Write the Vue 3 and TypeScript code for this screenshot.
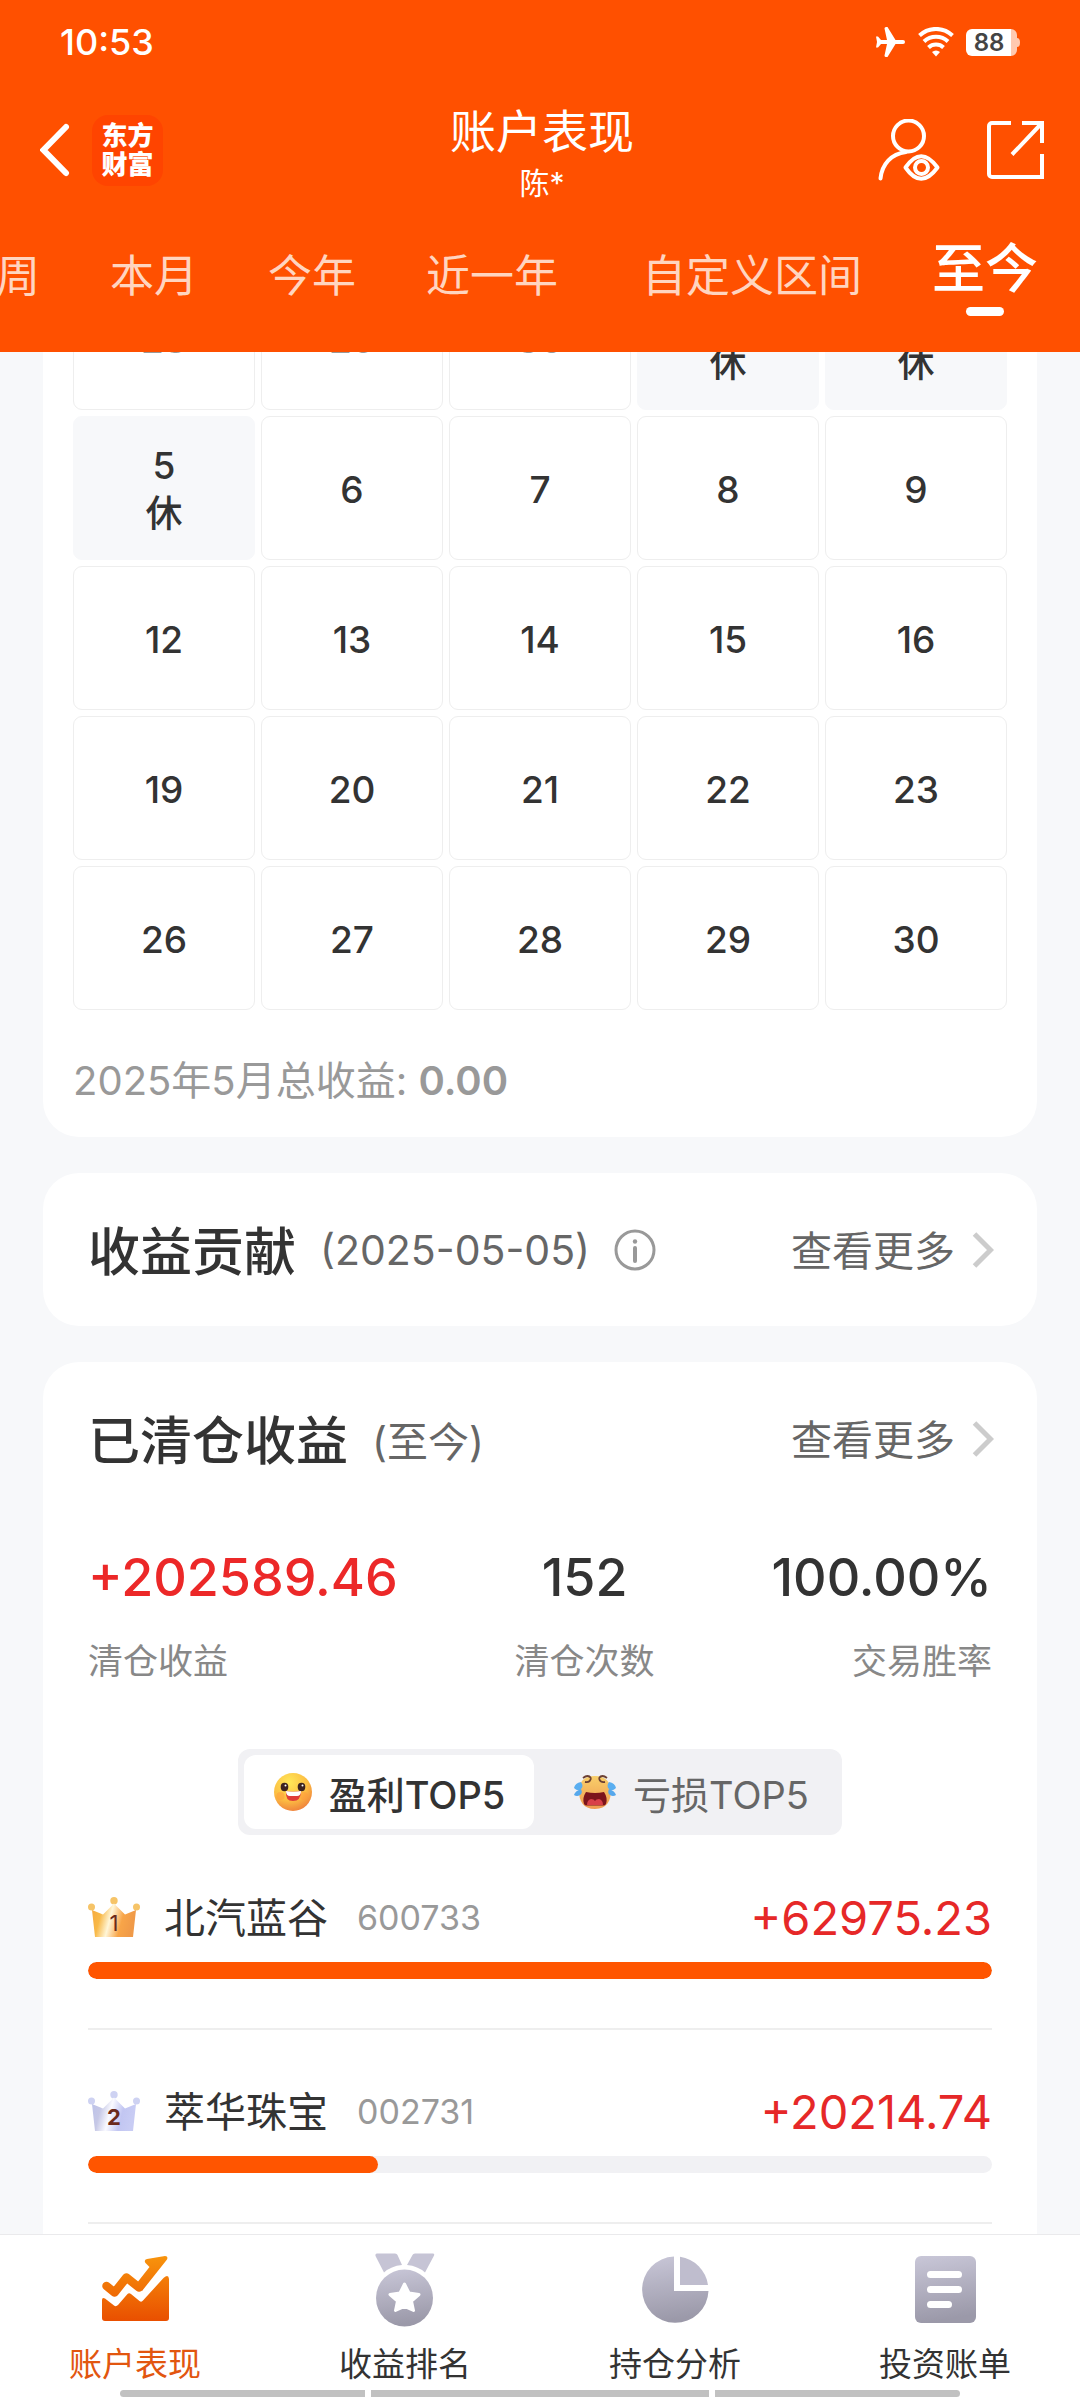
<script setup lang="ts">
import { ref } from 'vue'

interface Day {
  label: string
  rest?: boolean
  outside?: boolean
}

interface Holding {
  rank: number
  name: string
  code: string
  amount: string
  share: number
}

const ranges: string[] = ['本周', '本月', '今年', '近一年', '自定义区间', '至今']
const activeRange = ref<string>('至今')

const days: Day[] = [
  { label: '28', outside: true },
  { label: '29', outside: true },
  { label: '30', outside: true },
  { label: '1', rest: true },
  { label: '2', rest: true },
  { label: '5', rest: true },
  ...[6, 7, 8, 9, 12, 13, 14, 15, 16, 19, 20, 21, 22, 23, 26, 27, 28, 29, 30].map((n) => ({
    label: String(n),
  })),
]

const stats = [
  { value: '+202589.46', label: '清仓收益', gain: true },
  { value: '152', label: '清仓次数', gain: false },
  { value: '100.00%', label: '交易胜率', gain: false },
]

const board = ref<'profit' | 'loss'>('profit')

const holdings: Holding[] = [
  { rank: 1, name: '北汽蓝谷', code: '600733', amount: '+62975.23', share: 100 },
  { rank: 2, name: '萃华珠宝', code: '002731', amount: '+20214.74', share: 32.1 },
]
</script>

<template>
  <div class="app">
    <header class="header">
      <div class="status">
        <time class="clock">10:53</time>
        <div class="signals">
          <svg width="30" height="30" viewBox="0 0 30 30" fill="#fff" aria-hidden="true">
            <path d="M0 9.500h2l3 3.500h6L8.500 1.500Q8.500 0 10 0h1.500L19.500 13H27a2 2 0 0 1 0 4h-7.500L11.500 30H10q-1.500 0-1.500-1.500L11 17H5l-3 3.500H0L1 15z" />
          </svg>
          <svg width="36" height="30" viewBox="0 0 36 30" fill="none" stroke="#fff" stroke-width="4" aria-hidden="true">
            <path d="M1.500 8.500a24 24 0 0 1 33 0" />
            <path d="M6 14.500a17.500 17.500 0 0 1 24 0" />
            <path d="M10.500 20.500a11 11 0 0 1 15 0" />
            <path d="M18 29.500l-4-4.500a6 6 0 0 1 8 0z" fill="#fff" stroke="none" />
          </svg>
          <span class="battery">
            <svg width="54" height="27" viewBox="0 0 54 27" aria-hidden="true">
              <path d="M45 0a6 6 0 0 1 6 6v3q3 0 3 4.500T51 18v3a6 6 0 0 1-6 6z" fill="#ffc9b0" />
              <path d="M6 0h39v27H6a6 6 0 0 1-6-6V6a6 6 0 0 1 6-6z" fill="#fff" />
            </svg>
            <span class="battery-level">88</span>
          </span>
        </div>
      </div>

      <div class="titlebar">
        <div class="side">
          <button class="icon-button" aria-label="返回">
            <svg width="30" height="54" viewBox="0 0 30 54" fill="none" stroke="#fff" stroke-width="6" stroke-linecap="round">
              <path d="M26 4L3.500 27L26 50" />
            </svg>
          </button>
          <a class="logo" href="#"><span>东方</span><span>财富</span></a>
        </div>
        <div class="heading">
          <h1>账户表现</h1>
          <p>陈*</p>
        </div>
        <div class="side side-end">
          <button class="icon-button" aria-label="账户可见性">
            <svg width="62" height="62" viewBox="0 0 62 62" fill="none" stroke="#fff" stroke-width="4" stroke-linecap="round">
              <circle cx="30.500" cy="17" r="15.500" />
              <path d="M28 33C13 35 4 45 2.500 59.500" />
              <path d="M27.500 48.500Q43 26 59.500 48.500Q43 71 27.500 48.500z" stroke-linejoin="round" />
              <circle cx="43.500" cy="48.500" r="6.500" />
            </svg>
          </button>
          <button class="icon-button" aria-label="分享">
            <svg width="57" height="58" viewBox="0 0 57 58" fill="none" stroke="#fff" stroke-width="4">
              <path d="M24 2H5a3 3 0 0 0-3 3v48a3 3 0 0 0 3 3h50V33" />
              <path d="M35 2h20v20M25 33.500L54 3" />
            </svg>
          </button>
        </div>
      </div>

      <nav class="ranges">
        <button
          v-for="r in ranges"
          :key="r"
          class="range"
          :class="{ active: r === activeRange, custom: r === '自定义区间' }"
          @click="activeRange = r"
        >
          {{ r }}
        </button>
      </nav>
    </header>

    <main class="content">
      <section class="card calendar">
        <div class="days">
          <button
            v-for="(d, i) in days"
            :key="i"
            class="day"
            :class="{ rest: d.rest, outside: d.outside }"
          >
            <span>{{ d.label }}</span>
            <span v-if="d.rest">休</span>
          </button>
        </div>
        <p class="total">2025年5月总收益: <strong>0.00</strong></p>
      </section>

      <section class="card">
        <div class="card-head">
          <h2>收益贡献</h2>
          <span class="period">(2025-05-05)</span>
          <button class="icon-button" aria-label="说明">
            <svg width="42" height="42" viewBox="0 0 42 42" fill="none" stroke="#999" stroke-width="3">
              <circle cx="21" cy="21" r="19" />
              <path d="M21 19v13" stroke-width="4" stroke-linecap="round" />
              <circle cx="21" cy="12.500" r="2.200" fill="#999" stroke="none" />
            </svg>
          </button>
          <a class="more" href="#">
            <span>查看更多</span>
            <svg width="22" height="36" viewBox="0 0 22 36" fill="none" stroke="#ccc" stroke-width="5">
              <path d="M2.500 2L18.500 18L2.500 34" />
            </svg>
          </a>
        </div>
      </section>

      <section class="card closed">
        <div class="card-head">
          <h2>已清仓收益</h2>
          <span class="period">(至今)</span>
          <a class="more" href="#">
            <span>查看更多</span>
            <svg width="22" height="36" viewBox="0 0 22 36" fill="none" stroke="#ccc" stroke-width="5">
              <path d="M2.500 2L18.500 18L2.500 34" />
            </svg>
          </a>
        </div>

        <dl class="stats">
          <div v-for="s in stats" :key="s.label" class="stat">
            <dt>{{ s.label }}</dt>
            <dd :class="{ gain: s.gain }">{{ s.value }}</dd>
          </div>
        </dl>

        <div class="boards">
          <button class="board" :class="{ active: board === 'profit' }" @click="board = 'profit'">
            <svg width="40" height="40" viewBox="0 0 40 40" aria-hidden="true">
              <defs>
                <radialGradient id="smile" cx="0.4" cy="0.25" r="0.8">
                  <stop offset="0" stop-color="#ffe858" />
                  <stop offset="0.6" stop-color="#fcbc42" />
                  <stop offset="1" stop-color="#ee7d3c" />
                </radialGradient>
              </defs>
              <circle cx="20" cy="20" r="19" fill="url(#smile)" />
              <circle cx="7.500" cy="24" r="4" fill="#ff9a3c" opacity="0.5" />
              <circle cx="31" cy="24" r="4" fill="#ff9a3c" opacity="0.5" />
              <ellipse cx="11.500" cy="15" rx="3.800" ry="4.200" fill="#3c2220" />
              <ellipse cx="28.500" cy="15" rx="3.800" ry="4.200" fill="#3c2220" />
              <circle cx="12.500" cy="13.500" r="1" fill="#fff" />
              <circle cx="29.500" cy="13.500" r="1" fill="#fff" />
              <path d="M13 19Q20 20.500 28 19Q28 29 20 29T13 19z" fill="#e03c38" />
              <path d="M13 19Q20 20.500 28 19Q28 24 24 24H17Q13 24 13 19z" fill="#fff" />
            </svg>
            <span>盈利TOP5</span>
          </button>
          <button class="board" :class="{ active: board === 'loss' }" @click="board = 'loss'">
            <svg width="44" height="36" viewBox="0 0 44 36" aria-hidden="true">
              <defs>
                <linearGradient id="cry" x1="0" y1="0" x2="0" y2="1">
                  <stop offset="0" stop-color="#f8cf6a" />
                  <stop offset="1" stop-color="#f09a50" />
                </linearGradient>
              </defs>
              <path d="M22 2C32 2 38 8 38 17S34 35 22 35 6 27 6 17 12 2 22 2z" fill="url(#cry)" />
              <path d="M10 4q5-4 8 0M34 4q-5-4-8 0M12 8q5 1 6-4M32 8q-5 1-6-4" fill="none" stroke="#6b4034" stroke-width="1.800" />
              <path d="M13 18Q22 20 31 18Q35 24 33 30Q32 32 29 31.500H15Q12 32 11 30Q9 24 13 18z" fill="#7c141c" />
              <path d="M14 31q0-5 4-6 3 0 4 2 1-2 4-2 4 1 4 6z" fill="#d84048" />
              <path d="M8 8q3 4 0 7T1 14Q2 9 8 8zM36 8q-3 4 0 7t7-1Q42 9 36 8z" fill="#5aaef0" />
              <path d="M8 15q2 4-1 6t-6 0q1-4 7-6zM36 15q-2 4 1 6t6 0q-1-4-7-6z" fill="#56a8ec" />
            </svg>
            <span>亏损TOP5</span>
          </button>
        </div>

        <ol class="holdings">
          <li v-for="h in holdings" :key="h.code" class="holding">
            <div class="holding-line">
              <svg class="crown" width="52" height="40" viewBox="0 0 52 40" role="img" :aria-label="`第${h.rank}名`">
                <defs>
                  <linearGradient id="crown1" x1="0" x2="1" y1="0" y2="0.2">
                    <stop offset="0" stop-color="#f6a83c" />
                    <stop offset="0.25" stop-color="#f8b948" />
                    <stop offset="0.48" stop-color="#fff6d8" />
                    <stop offset="0.75" stop-color="#f8a548" />
                    <stop offset="1" stop-color="#f09a48" />
                  </linearGradient>
                  <linearGradient id="crown2" x1="0" x2="1" y1="0" y2="0.2">
                    <stop offset="0" stop-color="#bcc2ea" />
                    <stop offset="0.25" stop-color="#c6c8e6" />
                    <stop offset="0.48" stop-color="#fafaff" />
                    <stop offset="0.75" stop-color="#c2c6f2" />
                    <stop offset="1" stop-color="#c8ccf4" />
                  </linearGradient>
                </defs>
                <g :fill="h.rank === 1 ? '#f6c468' : '#ced2f2'">
                  <circle cx="3.500" cy="10" r="3.500" />
                  <circle cx="26" cy="3.700" r="3.700" />
                  <circle cx="48.500" cy="10" r="3.500" />
                </g>
                <path d="M4 13L15 17.500L26 6.500L37 17.500L48 13L45 40H7z" :fill="`url(#crown${h.rank})`" />
                <text x="26" y="34" class="rank" :class="{ heavy: h.rank > 1 }">{{ h.rank }}</text>
              </svg>
              <span class="name">{{ h.name }}</span>
              <span class="code">{{ h.code }}</span>
              <span class="amount">{{ h.amount }}</span>
            </div>
            <div class="track"><div class="fill" :style="{ width: h.share + '%' }"></div></div>
          </li>
        </ol>
      </section>
    </main>

    <footer class="tabbar">
      <nav class="tabs">
        <a class="tab current" href="#">
          <svg width="67" height="74" viewBox="0 -3 67 74">
            <defs>
              <linearGradient id="trend" gradientUnits="userSpaceOnUse" x1="0" y1="0" x2="0" y2="65">
                <stop offset="0" stop-color="#f8940c" />
                <stop offset="1" stop-color="#e94f00" />
              </linearGradient>
              <linearGradient id="cool" x1="0" y1="0" x2="0.150" y2="1">
                <stop offset="0" stop-color="#c9c7d8" />
                <stop offset="1" stop-color="#9b99a9" />
              </linearGradient>
            </defs>
            <path d="M4.500 30L12.500 36.500L24.500 21.500L37 31.500" fill="none" stroke="url(#trend)" stroke-width="8.500" stroke-linecap="round" stroke-linejoin="round" />
            <path d="M34.500 27.500L47.500 11L43.500 7Q41.500 4 45 3L63 0Q66.500 0 65 3.500L40 35z" fill="url(#trend)" />
            <path d="M0 44Q0 41 3 42.500L12 49.500Q14 51 16 49L25.500 38Q27 36.500 29 38L37.500 45Q39.500 46.500 41 44.500L61.500 22Q66.500 17.500 67 23V62Q67 65 64 65H3Q0 65 0 62z" fill="url(#trend)" />
          </svg>
          <span>账户表现</span>
        </a>
        <a class="tab" href="#">
          <svg width="60" height="74" viewBox="0 0 60 74">
            <path d="M2 0.500H20Q22 0.500 22.500 2L27 12Q16 13 9 19.500L0.500 3Q0 0.500 2 0.500zM58 0.500H40Q38 0.500 37.500 2L32 12Q43 13 50 19.500L58.800 3Q60 0.500 58 0.500z" fill="#c6c4d5" />
            <circle cx="29.500" cy="45" r="28.500" fill="url(#cool)" />
            <path d="M29.500 31L34 40L44 41.500L36.500 48L38.500 57.500L29.500 53.500L20.500 57.500L22.500 48L15 41.500L25 40z" fill="#fff" stroke="#fff" stroke-width="3" stroke-linejoin="round" />
          </svg>
          <span>收益排名</span>
        </a>
        <a class="tab" href="#">
          <svg width="67" height="74" viewBox="0 -3 67 74">
            <path d="M32 0.500A33.200 33.200 0 1 0 66.500 35H32z" fill="url(#cool)" />
            <path d="M38 0.800A33.200 33.200 0 0 1 66 29H38z" fill="#bfbdce" />
          </svg>
          <span>持仓分析</span>
        </a>
        <a class="tab" href="#">
          <svg width="61" height="74" viewBox="0 -3 61 74">
            <rect width="61" height="67" rx="6" fill="url(#cool)" />
            <path d="M15.500 18.500h28M15.500 33.500h28M15.500 48.500h18" stroke="#fff" stroke-width="7" stroke-linecap="round" />
          </svg>
          <span>投资账单</span>
        </a>
      </nav>
      <div class="home"><i></i><i></i><i></i></div>
    </footer>
  </div>
</template>

<style>
body {
  margin: 0;
  background: #f7f8fa;
}
</style>

<style scoped>
.app {
  display: flex;
  flex-direction: column;
  height: 100vh;
  overflow: hidden;
  background: #f7f8fa;
  color: #333;
  font-family: Inter, "Noto Sans CJK SC", sans-serif;
}

button {
  margin: 0;
  padding: 0;
  border: 0;
  background: none;
  color: inherit;
  font: inherit;
}

a {
  color: inherit;
  text-decoration: none;
}

h1,
h2,
p,
dl,
dd,
ol {
  margin: 0;
  padding: 0;
}

svg {
  display: block;
  flex: none;
}

/* Header */
.header {
  flex: none;
  background: #ff5000;
  color: #fff;
}

.status {
  display: flex;
  align-items: center;
  justify-content: space-between;
  height: 84px;
  padding: 0 60px;
}

.clock {
  font-size: 36px;
  font-weight: 500;
}

.signals {
  display: flex;
  align-items: center;
  gap: 12px;
}

.battery {
  position: relative;
}

.battery-level {
  position: absolute;
  inset: 0 8px 0 0;
  color: #444;
  font-size: 24px;
  font-weight: 600;
  line-height: 28px;
  text-align: center;
}

.titlebar {
  display: grid;
  grid-template-columns: 1fr auto 1fr;
  align-items: center;
  height: 132px;
  padding: 0 36px 0 40px;
}

.side {
  display: flex;
  align-items: center;
  gap: 22px;
}

.side-end {
  justify-content: flex-end;
  gap: 47px;
}

.logo {
  display: flex;
  flex-direction: column;
  align-items: center;
  justify-content: center;
  width: 71px;
  height: 71px;
  border-radius: 16px;
  background: #ff4400;
  font-size: 26px;
  font-weight: 900;
  line-height: 29px;
}

.heading {
  padding-top: 6px;
  text-align: center;
}

.heading h1 {
  font-size: 46px;
  font-weight: 400;
  line-height: 60px;
}

.heading p {
  font-size: 30px;
  line-height: 44px;
}

.ranges {
  display: flex;
  align-items: center;
  justify-content: flex-end;
  gap: 70px;
  height: 120px;
  padding: 0 42px 16px 0;
  overflow: hidden;
  white-space: nowrap;
}

.range {
  flex: none;
  color: #ffd5c0;
  font-size: 44px;
  line-height: 60px;
}

.range.custom {
  margin-left: 14px;
}

.range.active {
  color: #fff;
  font-size: 53px;
  font-weight: 500;
  line-height: 64px;
}

.range.active::after {
  content: "";
  display: block;
  width: 38px;
  height: 9px;
  margin: 6px auto 0;
  border-radius: 5px;
  background: #fff;
}

/* Scrolled page content */
.content {
  display: flex;
  flex: 1;
  flex-direction: column;
  gap: 36px;
  min-height: 0;
  padding: 0 43px;
  overflow: hidden;
}

.card {
  flex: none;
  border-radius: 36px;
  background: #fff;
}

.calendar {
  margin-top: -86px;
  padding: 0 30px 26px;
}

.days {
  display: grid;
  grid-template-columns: repeat(5, 1fr);
  grid-auto-rows: 144px;
  gap: 6px;
}

.day {
  display: flex;
  flex-direction: column;
  align-items: center;
  justify-content: center;
  padding-top: 4px;
  border: 1px solid #eee;
  border-radius: 9px;
  font-size: 37px;
  font-weight: 500;
  line-height: 48px;
}

.day.rest {
  border-color: #f7f8fa;
  background: #f7f8fa;
}

.day.outside {
  color: #999;
}

.total {
  margin-top: 41px;
  color: #999;
  font-size: 40px;
  line-height: 60px;
}

.total strong {
  font-weight: 600;
}

.card-head {
  display: flex;
  align-items: center;
  height: 153px;
  padding: 0 43px 0 45px;
}

.card-head h2 {
  padding-bottom: 3px;
  font-size: 52px;
  font-weight: 500;
}

.period {
  margin: 0 24px;
  color: #666;
  font-size: 41px;
}

.more {
  display: flex;
  align-items: center;
  gap: 17px;
  margin-left: auto;
  color: #666;
  font-size: 41px;
}

.more span {
  padding-bottom: 4px;
}

.card.closed {
  flex: 1 0 auto;
  border-radius: 36px 36px 0 0;
}

.stats {
  display: flex;
  justify-content: space-between;
  padding: 27px 45px 0;
}

.stat {
  display: flex;
  flex-direction: column-reverse;
  gap: 23px;
  text-align: center;
}

.stat:first-child {
  text-align: left;
}

.stat:last-child {
  text-align: right;
}

.stat dt {
  color: #888;
  font-size: 35px;
  line-height: 48px;
}

.stat dd {
  font-size: 52px;
  font-weight: 500;
  line-height: 72px;
}

.stat dd.gain {
  color: #ec2828;
}

.boards {
  display: flex;
  gap: 12px;
  width: max-content;
  margin: 64px auto 0;
  padding: 6px;
  border-radius: 12px;
  background: #f1f1f4;
}

.board {
  display: flex;
  align-items: center;
  justify-content: center;
  gap: 16px;
  width: 290px;
  height: 74px;
  border-radius: 12px;
  color: #666;
  font-size: 38px;
}

.board.active {
  background: #fff;
  color: #333;
  font-weight: 500;
}

.holdings {
  padding: 1px 45px 0;
  list-style: none;
}

.holding {
  padding: 51px 0 49px;
  border-bottom: 2px solid #eee;
}

.holding-line {
  display: flex;
  align-items: center;
  height: 60px;
}

.rank {
  fill: #6b2a1c;
  font-size: 22px;
  text-anchor: middle;
}

.rank.heavy {
  font-weight: 700;
}

.name {
  margin-left: 24px;
  padding-bottom: 4px;
  font-size: 41px;
}

.code {
  margin-left: 29px;
  color: #999;
  font-size: 34px;
}

.amount {
  margin-left: auto;
  color: #e62828;
  font-size: 47px;
}

.track {
  height: 17px;
  margin-top: 15px;
  border-radius: 9px;
  background: #f1f1f4;
  overflow: hidden;
}

.fill {
  height: 100%;
  border-radius: 9px;
  background: #ff5500;
}

/* Bottom navigation */
.tabbar {
  flex: none;
  border-top: 1px solid #eaeaec;
  background: #fff;
}

.tabs {
  display: grid;
  grid-template-columns: repeat(4, 1fr);
  padding-top: 18px;
}

.tab {
  display: flex;
  flex-direction: column;
  align-items: center;
  gap: 13px;
  font-size: 33px;
  line-height: 48px;
}

.tab.current {
  color: #e2560f;
}

.home {
  display: flex;
  gap: 6px;
  margin: 2px 120px 3px;
}

.home i {
  flex: 245;
  height: 7px;
  background: #c1c1c1;
}

.home i:nth-child(2) {
  flex: 338;
}

.home i:first-child {
  border-radius: 4px 0 0 4px;
}

.home i:last-child {
  border-radius: 0 4px 4px 0;
}
</style>
